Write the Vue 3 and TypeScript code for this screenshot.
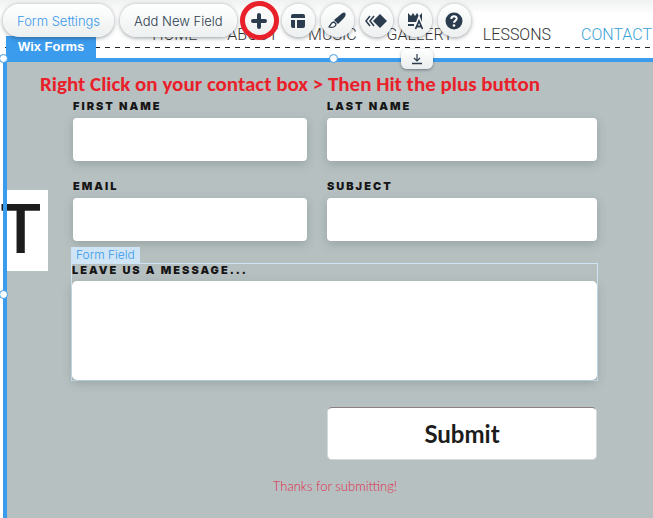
<script setup lang="ts">
import { ref } from 'vue'

interface Field {
  id: string
  label: string
}

const links: string[] = ['HOME', 'ABOUT', 'MUSIC', 'GALLERY', 'LESSONS', 'CONTACT']
const fields: Field[] = [
  { id: 'first-name', label: 'FIRST NAME' },
  { id: 'last-name', label: 'LAST NAME' },
  { id: 'email', label: 'EMAIL' },
  { id: 'subject', label: 'SUBJECT' },
]
const values = ref<Record<string, string>>({})
const message = ref('')
</script>

<template>
  <div class="page">
    <header class="site-header">
      <nav class="nav">
        <a v-for="link in links" :key="link" href="#" :class="{ current: link === 'CONTACT' }">{{ link }}</a>
      </nav>
    </header>

    <div class="toolbar">
      <button type="button" class="pill active">Form Settings</button>
      <button type="button" class="pill">Add New Field</button>
      <button type="button" class="round ringed" aria-label="Add">
        <svg viewBox="0 0 20 20"><path d="M10 4v12M4 10h12" stroke="#2b3c4e" stroke-width="4" stroke-linecap="round" /></svg>
      </button>
      <button type="button" class="round" aria-label="Layout">
        <svg viewBox="0 0 20 20" fill="#2b3c4e"><path d="M5 3h10a2 2 0 0 1 2 2v2H3V5a2 2 0 0 1 2-2zM3 9h4v8H5a2 2 0 0 1-2-2zM9 9h8v6a2 2 0 0 1-2 2H9z" /></svg>
      </button>
      <button type="button" class="round" aria-label="Design">
        <svg viewBox="0 0 20 20"><path d="M18 2c1.500 1 0 4-1 5l-6 6-4-4 6-5c2-2 4-3 5-2z" fill="#2b3c4e" /><path d="M7 11c-3 0-3 3-5 5 3 1 7 0 7-3z" fill="#fff" stroke="#2b3c4e" stroke-width="1.300" stroke-linejoin="round" /></svg>
      </button>
      <button type="button" class="round" aria-label="Animation">
        <svg class="wide" viewBox="0 0 22 20"><path d="M15 3l7 7-7 7-7-7z" fill="#2b3c4e" /><path d="M5 5L1 10l4 5M9 5l-4 5 4 5" fill="none" stroke="#2b3c4e" stroke-width="1.500" /></svg>
      </button>
      <button type="button" class="round" aria-label="Stretch">
        <svg viewBox="0 0 20 20"><path d="M3 2l3 3 2-3 2 3 2-3 2 3 3-3v9H3z" fill="#2b3c4e" /><path d="M3 14h6" stroke="#2b3c4e" stroke-width="2" /><path d="M10.500 18L14 9l3.500 9M12 15h4" fill="none" stroke="#fff" stroke-width="4" /><path d="M10.500 18L14 10l3.500 8M12 15.500h4" fill="none" stroke="#2b3c4e" stroke-width="1.800" /></svg>
      </button>
      <button type="button" class="round" aria-label="Help">
        <svg viewBox="0 0 20 20"><circle cx="10" cy="10" r="8.500" fill="#2b3c4e" /><path d="M7.300 8c0-3.700 5.600-3.500 5.400-.3-.1 1.900-2.700 2-2.700 4.100" fill="none" stroke="#fff" stroke-width="2" /><circle cx="10" cy="14.500" r="1.300" fill="#fff" /></svg>
      </button>
    </div>

    <main class="workspace">
      <span class="app-tag">Wix Forms</span>
      <div class="title-tile">T</div>
      <i class="edge"></i>
      <i class="handle top-left"></i>
      <i class="handle top"></i>
      <i class="handle left"></i>
      <button type="button" class="download" aria-label="Move down">
        <svg viewBox="0 0 12 12" fill="none" stroke="#2b3c4e"><path d="M6 1v7M3 5l3 3 3-3" stroke-width="1.200" /><path d="M1 10.500h10" stroke-width="1.500" /></svg>
      </button>

      <p class="note">Right Click on your contact box &gt; Then Hit the plus button</p>

      <form class="form" @submit.prevent>
        <div class="grid">
          <div v-for="field in fields" :key="field.id" class="field">
            <label :for="field.id">{{ field.label }}</label>
            <input :id="field.id" v-model="values[field.id]" type="text" />
          </div>
        </div>
        <div class="message">
          <span class="field-tag">Form Field</span>
          <label for="message">LEAVE US A MESSAGE...</label>
          <textarea id="message" v-model="message"></textarea>
        </div>
        <div class="grid">
          <button type="submit" class="submit">Submit</button>
        </div>
        <p class="thanks">Thanks for submitting!</p>
      </form>
    </main>
  </div>
</template>

<style>
body {
  margin: 0;
  background: #fff;
}
</style>

<style scoped>
.page {
  position: relative;
  display: flex;
  flex-direction: column;
  min-height: 100vh;
  overflow: hidden;
  font-family: Roboto, "Liberation Sans", sans-serif;
}
.page * {
  box-sizing: border-box;
}
.site-header {
  height: 58px;
  background: linear-gradient(#f0f1f1, #fff 14px);
}
.nav {
  display: flex;
  justify-content: flex-end;
  gap: 30px;
  height: 48px;
  margin-left: 5px;
  padding: 25px 1px 0 0;
  background: repeating-linear-gradient(90deg, #222 0 5px, transparent 5px 10px) bottom / 100% 1px no-repeat;
}
.nav a {
  color: #333;
  font-size: 16px;
  font-weight: 300;
  line-height: 20px;
  text-decoration: none;
}
.nav .current {
  color: #3a9fd6;
}
.toolbar {
  position: absolute;
  z-index: 3;
  top: 4px;
  left: 3px;
  display: flex;
  gap: 6px;
}
.toolbar button {
  display: flex;
  align-items: center;
  justify-content: center;
  height: 33px;
  border: 0;
  background: linear-gradient(#fff, #edf0f0);
  box-shadow: 0 1px 4px rgba(40, 50, 60, 0.5);
}
.toolbar .pill {
  padding: 0 14px;
  border-radius: 17px;
  color: #2b3c4e;
  font-family: Inter, "Liberation Sans", sans-serif;
  font-size: 13px;
  font-weight: 300;
}
.toolbar .active {
  color: #3899ec;
}
.toolbar .round {
  width: 33px;
  padding: 0;
  border-radius: 50%;
}
.toolbar .ringed {
  outline: 5px solid #e9202a;
  outline-offset: -2px;
}
.round svg {
  width: 20px;
  height: 20px;
}
.round .wide {
  width: 22px;
}
.workspace {
  position: relative;
  flex: 1;
  margin-left: 3px;
  padding: 10px 56px 20px 66px;
  border-top: 4px solid #3b9bed;
  border-left: 4px solid #3b9bed;
  background: #b6c0c1;
}
.app-tag {
  position: absolute;
  top: -26px;
  left: -1px;
  padding: 0 12px;
  background: #3b9bed;
  color: #fff;
  font-family: "Liberation Sans", sans-serif;
  font-size: 13px;
  font-weight: 700;
  line-height: 22px;
}
.title-tile {
  position: absolute;
  top: 128px;
  left: -7px;
  width: 48px;
  height: 81px;
  background: #fff;
  color: #1c1c1c;
  font-family: Roboto, sans-serif;
  font-size: 68px;
  font-weight: 500;
  line-height: 81px;
}
.edge {
  position: absolute;
  top: 0;
  bottom: 0;
  left: -4px;
  width: 4px;
  background: #3b9bed;
}
.handle {
  position: absolute;
  width: 9px;
  height: 9px;
  border: 1px solid #3b9bed;
  border-radius: 50%;
  background: #fff;
}
.top-left {
  top: -8px;
  left: -8px;
}
.top {
  top: -8px;
  left: 322px;
}
.left {
  top: 228px;
  left: -8px;
}
.download {
  position: absolute;
  top: -13px;
  left: 394px;
  display: flex;
  align-items: center;
  justify-content: center;
  width: 32px;
  height: 20px;
  padding: 0;
  border: 0;
  border-radius: 6px;
  background: linear-gradient(#fff, #e9eded);
  box-shadow: 0 1px 3px rgba(40, 50, 60, 0.5);
}
.download svg {
  width: 12px;
  height: 12px;
}
.note {
  margin: 0 0 4px -33px;
  color: #e9202a;
  font-family: Carlito, Lato, sans-serif;
  font-size: 21px;
  font-weight: 700;
  line-height: 24px;
  white-space: nowrap;
}
.grid {
  display: grid;
  grid-template-columns: 234fr 270fr;
  gap: 19px 20px;
}
.field {
  display: flex;
  flex-direction: column;
  gap: 6px;
}
label {
  color: #161616;
  font-family: Inter, sans-serif;
  font-size: 11px;
  font-weight: 900;
  letter-spacing: 2px;
  line-height: 12px;
}
input,
textarea {
  width: 100%;
  height: 43px;
  border: 0;
  border-radius: 4px;
  outline: 0;
  background: #fff;
  box-shadow: 0 3px 10px rgba(60, 75, 75, 0.25);
  font: 14px Lato, sans-serif;
}
.message {
  position: relative;
  display: flex;
  flex-direction: column;
  gap: 5px;
  margin: 22px -1px 26px -2px;
  border: 1px solid #cfe5f5;
}
textarea {
  display: block;
  height: 99px;
  border-radius: 5px;
  resize: none;
}
.field-tag {
  position: absolute;
  top: -17px;
  left: -1px;
  padding: 0 5px;
  background: #cfe5f5;
  color: #3899ec;
  font-family: Inter, "Liberation Sans", sans-serif;
  font-size: 12px;
  font-weight: 300;
  line-height: 16px;
}
.submit {
  grid-column: 2;
  height: 53px;
  border: 1px solid #d5d9d9;
  border-top-color: #8b7f80;
  border-radius: 5px;
  background: #fff;
  color: #1c1c1c;
  font-family: Lato, sans-serif;
  font-size: 24px;
  font-weight: 700;
}
.thanks {
  margin: 16px 0 0;
  color: #e02c4c;
  font-family: Lato, sans-serif;
  font-size: 13px;
  font-weight: 300;
  line-height: 20px;
  text-align: center;
}
</style>
